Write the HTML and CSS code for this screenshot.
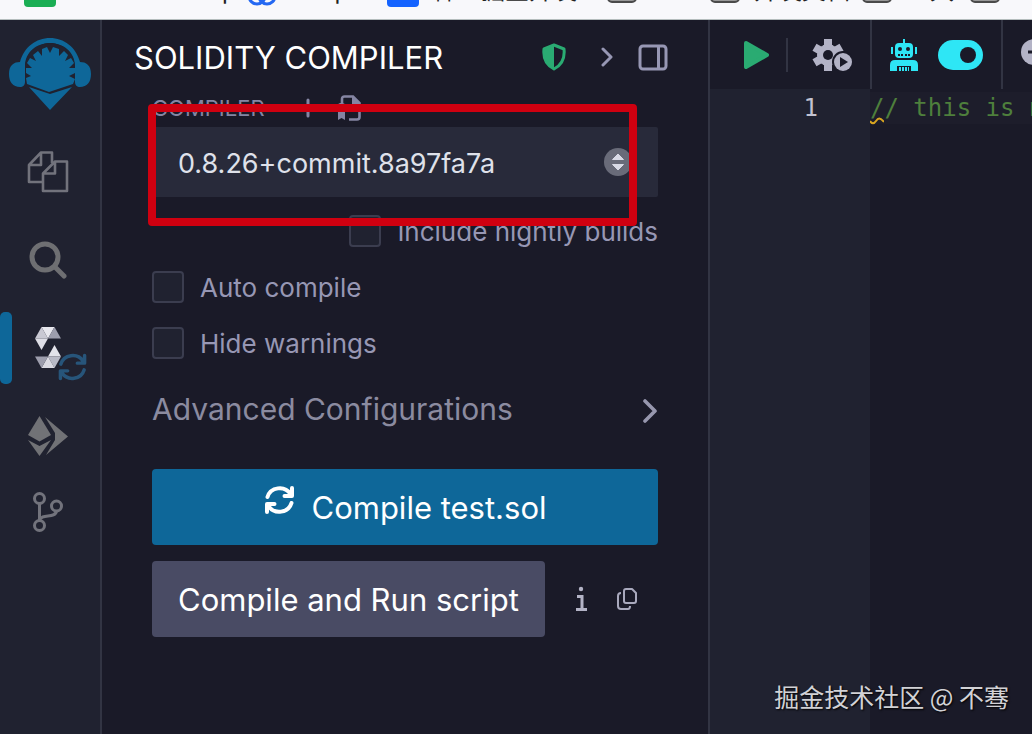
FILE: index.html
```html
<!DOCTYPE html>
<html lang="en">
<head>
    <meta charset="UTF-8">
    <meta name="viewport" content="width=device-width, initial-scale=1.0">
    <title>Solidity Compiler</title>
    <link rel="stylesheet" href="styles.css">
</head>
<body>

    <nav class="bookmarks">
        <a href="#" class="mark-1"><i class="square green"></i>Awesome Maps</a>
        <a href="#" class="mark-2">
            <svg width="30" height="30" viewBox="0 0 30 30" fill="none" stroke="#2468f2" stroke-width="3"><circle cx="10" cy="20" r="8"/><circle cx="20" cy="20" r="8"/><circle cx="15" cy="11" r="8"/></svg>Scope</a>
        <a href="#" class="mark-3"><i class="square blue"></i>稀土掘金开发</a>
        <a href="#" class="mark-4"><i class="folder"></i>AI</a>
        <a href="#" class="mark-5"><i class="folder"></i>开发文档</a>
        <a href="#" class="mark-6"><i class="folder"></i>工具</a>
        <a href="#" aria-label="More"><i class="folder"></i></a>
    </nav>

    <div class="app">
        <aside class="sidebar">
            <a href="#" class="logo" aria-label="Home">
                <svg width="82" height="72" viewBox="0 0 82 72">
                    <path fill="#0e6799" d="M11 24C15 9 27 0 41 0s26 9 30 24c6 0 11 3 11 12 0 8-4 13-11 13-3 0-5-2-5-5V28C66 14 54 5 41 5S16 14 16 28v16c0 3-2 5-5 5C4 49 0 44 0 36c0-9 5-12 11-12z"/>
                    <circle cx="41" cy="30" r="25" fill="#202230"/>
                    <path fill="#0e6799" d="M18 46l-1-6 5-2-5-3v-5l6 0-5-5 3-5 6 3-3-6 5-4 4 5 0-7 5-2 3 6 3-6 6 2 0 7 5-5 4 4-3 6 6-3 3 5-5 5 6 0v5l-6 3 6 3-2 5-24 8z"/>
                    <path fill="#0e6799" d="M20 49l21 7 22-7-22 23z"/>
                </svg>
            </a>
            <button class="side-btn" aria-label="File explorer">
                <svg width="42" height="42" viewBox="0 0 42 42" fill="none" stroke="#72737c" stroke-width="2.6" stroke-linejoin="round">
                    <path d="M15 31H2V14L14 1.500h11V12M14 2v12H2"/>
                    <path d="M28 10.500h12V40H16V22.500zM28 11v11.500H16"/>
                </svg>
            </button>
            <button class="side-btn" aria-label="Search in files">
                <svg width="38" height="38" viewBox="0 0 38 38" fill="none" stroke="#6e6f72" stroke-width="5" stroke-linecap="round"><circle cx="16" cy="16" r="13"/><path d="M26 26l9 9"/></svg>
            </button>
            <button class="side-btn active" aria-label="Solidity compiler">
                <svg width="26" height="42" viewBox="0 0 26 42">
                    <path fill="#e8e8ee" d="M6.500 0h13l-6.500 11.500z"/>
                    <path fill="#c9c9d3" d="M6.500 0L13 11.500H0z"/>
                    <path fill="#dedee6" d="M0 11.500h13L6.500 23z"/>
                    <path fill="#9d9ead" d="M19.500 0L26 11.500H13z"/>
                    <path fill="#e3e3ea" d="M19.500 18L26 29.500H13z"/>
                    <path fill="#b9bac6" d="M13 29.500h13L19.500 41z"/>
                    <path fill="#dadae2" d="M6.500 41L13 29.500 19.500 41z"/>
                    <path fill="#9d9ead" d="M0 29.500h13L6.500 41z"/>
                </svg>
                <svg class="status" width="29" height="28" viewBox="0 0 30 28" fill="none" stroke="#27557a" stroke-width="3.600" stroke-linecap="round" stroke-linejoin="round"><path d="M3 11C6 1 20-1 26 8M27.500 2v8H20M27 17C24 27 10 29 4 20M2.500 26v-8H10"/></svg>
            </button>
            <button class="side-btn" aria-label="Deploy and run">
                <svg width="40" height="40" viewBox="0 0 40 40" fill="#717276"><path d="M11.500 0L23 19l-11.500 6.500L0 19z"/><path d="M0 24l11.500 6L23 24 11.500 40z"/><path d="M17 1l23 19.500L18 39l9-15v-7z"/></svg>
            </button>
            <button class="side-btn short" aria-label="Git">
                <svg width="30" height="40" viewBox="0 0 30 40" fill="none" stroke="#72737c" stroke-width="3"><circle cx="6.500" cy="6.500" r="5"/><circle cx="6.500" cy="33.500" r="5"/><circle cx="23.500" cy="14" r="5"/><path d="M6.500 12v16M23.500 19c-1 8-15 2-17 9"/></svg>
            </button>
        </aside>

        <main class="panel">
            <header class="panel-head">
                <h1>SOLIDITY COMPILER</h1>
                <svg class="shield" width="26" height="28" viewBox="0 0 26 28"><path fill="none" stroke="#2aab72" stroke-width="3" stroke-linejoin="round" d="M13 2l10 4c1 9-2 16-10 20C5 22 2 15 3 6z"/><path fill="#2aab72" d="M13 2v24C5 22 2 15 3 6z"/></svg>
                <button class="icon-btn" aria-label="Next">
                    <svg width="12" height="20" viewBox="0 0 12 20" fill="none" stroke="#9797b4" stroke-width="3" stroke-linecap="round" stroke-linejoin="round"><path d="M2 2l8 8-8 8"/></svg>
                </button>
                <button class="icon-btn" aria-label="Pin panel">
                    <svg width="30" height="27" viewBox="0 0 30 27" fill="none" stroke="#9797b4" stroke-width="3"><rect x="2" y="2" width="26" height="23" rx="3"/><path d="M20.500 2v23"/></svg>
                </button>
            </header>

            <form class="compiler">
                <div class="label-row">
                    <label for="version">COMPILER</label>
                    <button type="button" class="icon-btn" aria-label="Add compiler">
                        <svg width="20" height="20" viewBox="0 0 20 20" stroke="#8585a3" stroke-width="3" stroke-linecap="round"><path d="M10 2v16M2 10h16"/></svg>
                    </button>
                    <button type="button" class="icon-btn" aria-label="See license">
                        <svg width="25" height="26" viewBox="0 0 25 26" fill="none" stroke="#8585a3" stroke-width="2.600"><path d="M6 8V4q0-2.500 2.500-2.500H17L23.500 8v14q0 2.500-2.500 2.500h-8"/><path fill="#8585a3" stroke="none" d="M16 1v8h8z"/><circle cx="5.500" cy="13" r="4" fill="#8585a3"/><path fill="#8585a3" stroke="none" d="M2 15v10l3.500-2L9 25V15z"/></svg>
                    </button>
                </div>

                <div class="select-box">
                    <select id="version">
                        <option>0.8.26+commit.8a97fa7a</option>
                    </select>
                    <svg class="arrows" width="28" height="28" viewBox="0 0 28 28"><circle cx="14" cy="14" r="14" fill="#696b79"/><path fill="#d9dae6" stroke="#d9dae6" stroke-linejoin="round" d="M14 6l5.500 5.500h-11zM14 22l5.500-5.500h-11z"/></svg>
                </div>

                <label class="check right"><input type="checkbox">Include nightly builds</label>
                <label class="check"><input type="checkbox">Auto compile</label>
                <label class="check"><input type="checkbox">Hide warnings</label>

                <button type="button" class="advanced">
                    Advanced Configurations
                    <svg width="16" height="24" viewBox="0 0 16 24" fill="none" stroke="#9797ae" stroke-width="3.600" stroke-linecap="round" stroke-linejoin="round"><path d="M3 2l10 10L3 22"/></svg>
                </button>

                <button type="button" class="btn primary">
                    <svg width="31" height="28" viewBox="0 0 30 28" fill="none" stroke="#fff" stroke-width="4" stroke-linecap="round" stroke-linejoin="round"><path d="M3 11C6 1 20-1 26 8M27.500 2v8H20M27 17C24 27 10 29 4 20M2.500 26v-8H10"/></svg>
                    Compile test.sol
                </button>

                <div class="run-row">
                    <button type="button" class="btn secondary">Compile and Run script</button>
                    <button type="button" class="icon-btn" aria-label="Info">
                        <svg width="12" height="26" viewBox="0 0 12 26" fill="none" stroke="#b3b3c6" stroke-width="3"><circle cx="6" cy="3" r="2.200" fill="#b3b3c6" stroke="none"/><path d="M2 10.500h5V23M1 23.500h11"/></svg>
                    </button>
                    <button type="button" class="icon-btn" aria-label="Copy">
                        <svg width="20" height="22" viewBox="0 0 20 22" fill="none" stroke="#a9a9bd" stroke-width="2" stroke-linejoin="round"><path d="M9 1h6l4 4v8q0 2-2 2H9q-2 0-2-2V3q0-2 2-2z"/><path d="M4 5Q1 5 1 8v10q0 3 3 3h7q2 0 2-3"/></svg>
                    </button>
                </div>

                <div class="highlight-frame"></div>
            </form>
        </main>

        <section class="editor">
            <div class="toolbar">
                <div class="tools run-tools">
                    <button class="icon-btn" aria-label="Run">
                        <svg width="25" height="28" viewBox="0 0 25 28"><path fill="#2aab72" stroke="#2aab72" stroke-width="4" stroke-linejoin="round" d="M2 2l21 12L2 26z"/></svg>
                    </button>
                    <span class="divider"></span>
                    <button class="icon-btn" aria-label="Script configuration">
                        <svg width="40" height="32" viewBox="0 0 40 32">
                            <g fill="#b3b3c6" stroke="#b3b3c6"><circle cx="16" cy="16" r="10.500"/><path stroke-width="8" d="M16 0v32M2.500 8.200l27 15.600M2.500 23.800l27-15.600"/></g>
                            <circle cx="16" cy="16" r="5" fill="#1a1a28"/>
                            <circle cx="31" cy="23" r="11" fill="#1a1a28"/><circle cx="31" cy="23" r="9" fill="#b3b3c6"/>
                            <path fill="#1a1a28" d="M28 18l8 5-8 5z"/>
                        </svg>
                    </button>
                </div>
                <div class="tools ai-tools">
                    <svg width="28" height="32" viewBox="0 0 28 32" fill="#2ee6f5">
                        <path d="M13 0h2v5h-2z"/><rect x="5" y="4" width="18" height="15" rx="4"/><path d="M1 8h2v7H1zM25 8h2v7h-2z"/>
                        <path d="M0 32v-6q0-5 5-5h18q5 0 5 5v6h-7v-5H7v5z"/><path d="M9 28h2v4H9zM12 28h2v4h-2zM15 28h2v4h-2zM18 28h1v4h-1z"/>
                        <g fill="#1a1a28"><circle cx="10" cy="10" r="2"/><circle cx="18" cy="10" r="2"/><path d="M8 15h2v2H8zM11 15h2v2h-2zM15 15h2v2h-2zM18 15h2v2h-2z"/></g>
                    </svg>
                    <input type="checkbox" class="switch" aria-label="AI copilot" checked>
                </div>
                <div class="tools zoom-tools">
                    <button class="icon-btn" aria-label="Zoom out">
                        <svg width="30" height="34" viewBox="0 0 30 34"><circle cx="13" cy="14" r="13" fill="#b3b3c6"/><path d="M7 14h12M22 24l6 7" stroke="#1a1a28" stroke-width="3"/></svg>
                    </button>
                </div>
            </div>
            <div class="code">
                <div class="gutter">1</div>
                <pre class="lines"><span class="line">// this is not used<svg class="squiggle" width="14" height="8" viewBox="0 0 14 8" fill="none" stroke="#d9a520" stroke-width="2"><path d="M0 4c2 3 4 3 6 0s4-4 8 1"/></svg></span></pre>
            </div>
        </section>
    </div>

    <div class="watermark">掘金技术社区 @ 不骞</div>

</body>
</html>
```
FILE: styles.css
```css
* { margin: 0; padding: 0; box-sizing: border-box; }
body {
    display: flex; flex-direction: column; height: 100vh; overflow: hidden; position: relative;
    background: #1a1a28; color: #9797b4; font-family: Inter, "Noto Sans CJK SC", sans-serif;
}
button { border: none; background: none; font-family: inherit; cursor: pointer; }
svg { display: block; flex: none; }

/* bookmarks bar, only its lower edge shows */
.bookmarks {
    display: flex; align-items: flex-end; height: 20px; flex: none; overflow: hidden;
    padding: 0 0 10px 24px; background: #f8f8fb; border-bottom: 1px solid #b5bdbd;
}
.bookmarks a {
    display: flex; align-items: center; gap: 14px; flex: none; height: 36px;
    color: #222; text-decoration: none; font-size: 24px; line-height: 24px; white-space: nowrap;
}
.mark-1 { width: 223px; }
.mark-2 { width: 140px; }
.mark-3 { width: 220px; }
.mark-4 { width: 103px; }
.mark-5 { width: 152px; }
.mark-6 { width: 108px; }
.square { width: 32px; height: 32px; border-radius: 4px; flex: none; }
.green { background: #1bae54; }
.blue { background: #1463ff; }
.folder { width: 30px; height: 24px; border: 2px solid #4a4a4a; border-radius: 5px; background: #999; flex: none; }

.app { display: grid; grid-template-columns: 102px 608fr 322fr; flex: 1; min-height: 0; }

/* sidebar */
.sidebar { background: #202230; border-right: 2px solid #323443; display: flex; flex-direction: column; }
.logo { display: flex; justify-content: center; height: 108px; padding-top: 18px; }
.side-btn { position: relative; display: flex; align-items: center; justify-content: center; height: 88px; padding-right: 4px; }
.side-btn.short { height: 64px; }
.side-btn.active::before {
    content: ""; position: absolute; left: 0; top: 8px; width: 12px; height: 72px;
    border-radius: 5px; background: #0e6799;
}
.status { position: absolute; left: 58px; top: 49px; }

/* compiler panel */
.panel { border-right: 2px solid #323443; min-width: 0; }
.panel-head { display: flex; align-items: center; height: 74px; padding: 0 40px 0 32px; }
.panel-head h1 { flex: 1; color: #fff; font-size: 31px; font-weight: 400; white-space: nowrap; }
.shield { margin-right: 34px; }
.panel-head .icon-btn + .icon-btn { margin-left: 25px; }
.compiler { position: relative; display: flex; flex-direction: column; padding: 0 50px; }
.label-row { display: flex; align-items: center; height: 33px; padding-bottom: 6px; color: #8585a3; font-size: 22px; }
.label-row .icon-btn { margin-left: 18px; }
.label-row label { width: 128px; }
.select-box { position: relative; }
.select-box select {
    width: 100%; height: 70px; padding: 2px 26px 0; border: none; border-radius: 2px;
    background: #282a3a; color: #dfe1ea; font-family: inherit; font-size: 27px; appearance: none;
}
.arrows { position: absolute; right: 26px; top: 21px; pointer-events: none; }
.check { display: flex; align-items: center; gap: 16px; height: 56px; font-size: 26px; white-space: nowrap; }
.check.right { align-self: flex-end; margin-top: 6px; }
.check input {
    appearance: none; width: 32px; height: 32px; flex: none;
    border: 2px solid #3b3d4f; border-radius: 4px; background: #202230;
}
.advanced {
    display: flex; align-items: center; justify-content: space-between; height: 80px; padding-bottom: 4px;
    color: #8b8ba0; font-size: 30px; white-space: nowrap;
}
.advanced svg { margin-top: 4px; }
.btn { height: 76px; border-radius: 4px; color: #fff; font-size: 31px; white-space: nowrap; }
.primary { display: flex; align-items: center; justify-content: center; gap: 17px; margin-top: 18px; background: #0e6799; }
.primary svg { margin-bottom: 14px; }
.run-row { display: flex; align-items: center; margin-top: 16px; }
.secondary { padding: 0 26px; background: #494b64; }
.run-row .icon-btn { margin-left: 30px; }
.highlight-frame {
    position: absolute; left: 46px; top: 10px; width: 489px; height: 122px;
    border: 8px solid #cf0010; border-radius: 4px; pointer-events: none;
}

/* editor */
.editor { display: flex; flex-direction: column; min-width: 0; overflow: hidden; }
.toolbar { display: flex; height: 69px; flex: none; }
.tools { display: flex; align-items: center; flex: none; }
.run-tools { width: 162px; padding-left: 34px; border-right: 2px solid #323443; }
.ai-tools { width: 131px; padding: 0 18px; justify-content: space-between; border-right: 2px solid #323443; }
.zoom-tools { padding-left: 18px; }
.divider { width: 2px; height: 34px; margin: 0 24px 0 17px; background: #323443; }
.switch { appearance: none; width: 45px; height: 30px; border-radius: 15px; background: #2ee6f5; cursor: pointer; }
.switch::after {
    content: ""; display: block; width: 16px; height: 16px; margin: 7px 7px 0 auto;
    border-radius: 50%; background: #1a1a28;
}
.code { display: flex; flex: 1; font-family: "DejaVu Sans Mono", monospace; font-size: 24px; line-height: 32px; }
.gutter { width: 160px; flex: none; padding: 3px 52px 0 0; background: #202230; color: #c3c3d2; text-align: right; }
.lines { flex: 1; padding-top: 3px; font-family: inherit; color: #4e7f3c; }
.line { position: relative; display: block; background: #1d1d2b; }
.squiggle { position: absolute; left: 0; top: 25px; }

.watermark {
    position: absolute; right: 23px; bottom: 20px; color: #d2d2d6; font-size: 25px; line-height: 36px;
    font-family: "Noto Sans CJK SC", sans-serif; text-shadow: 1px 1px 2px #000;
}
```
